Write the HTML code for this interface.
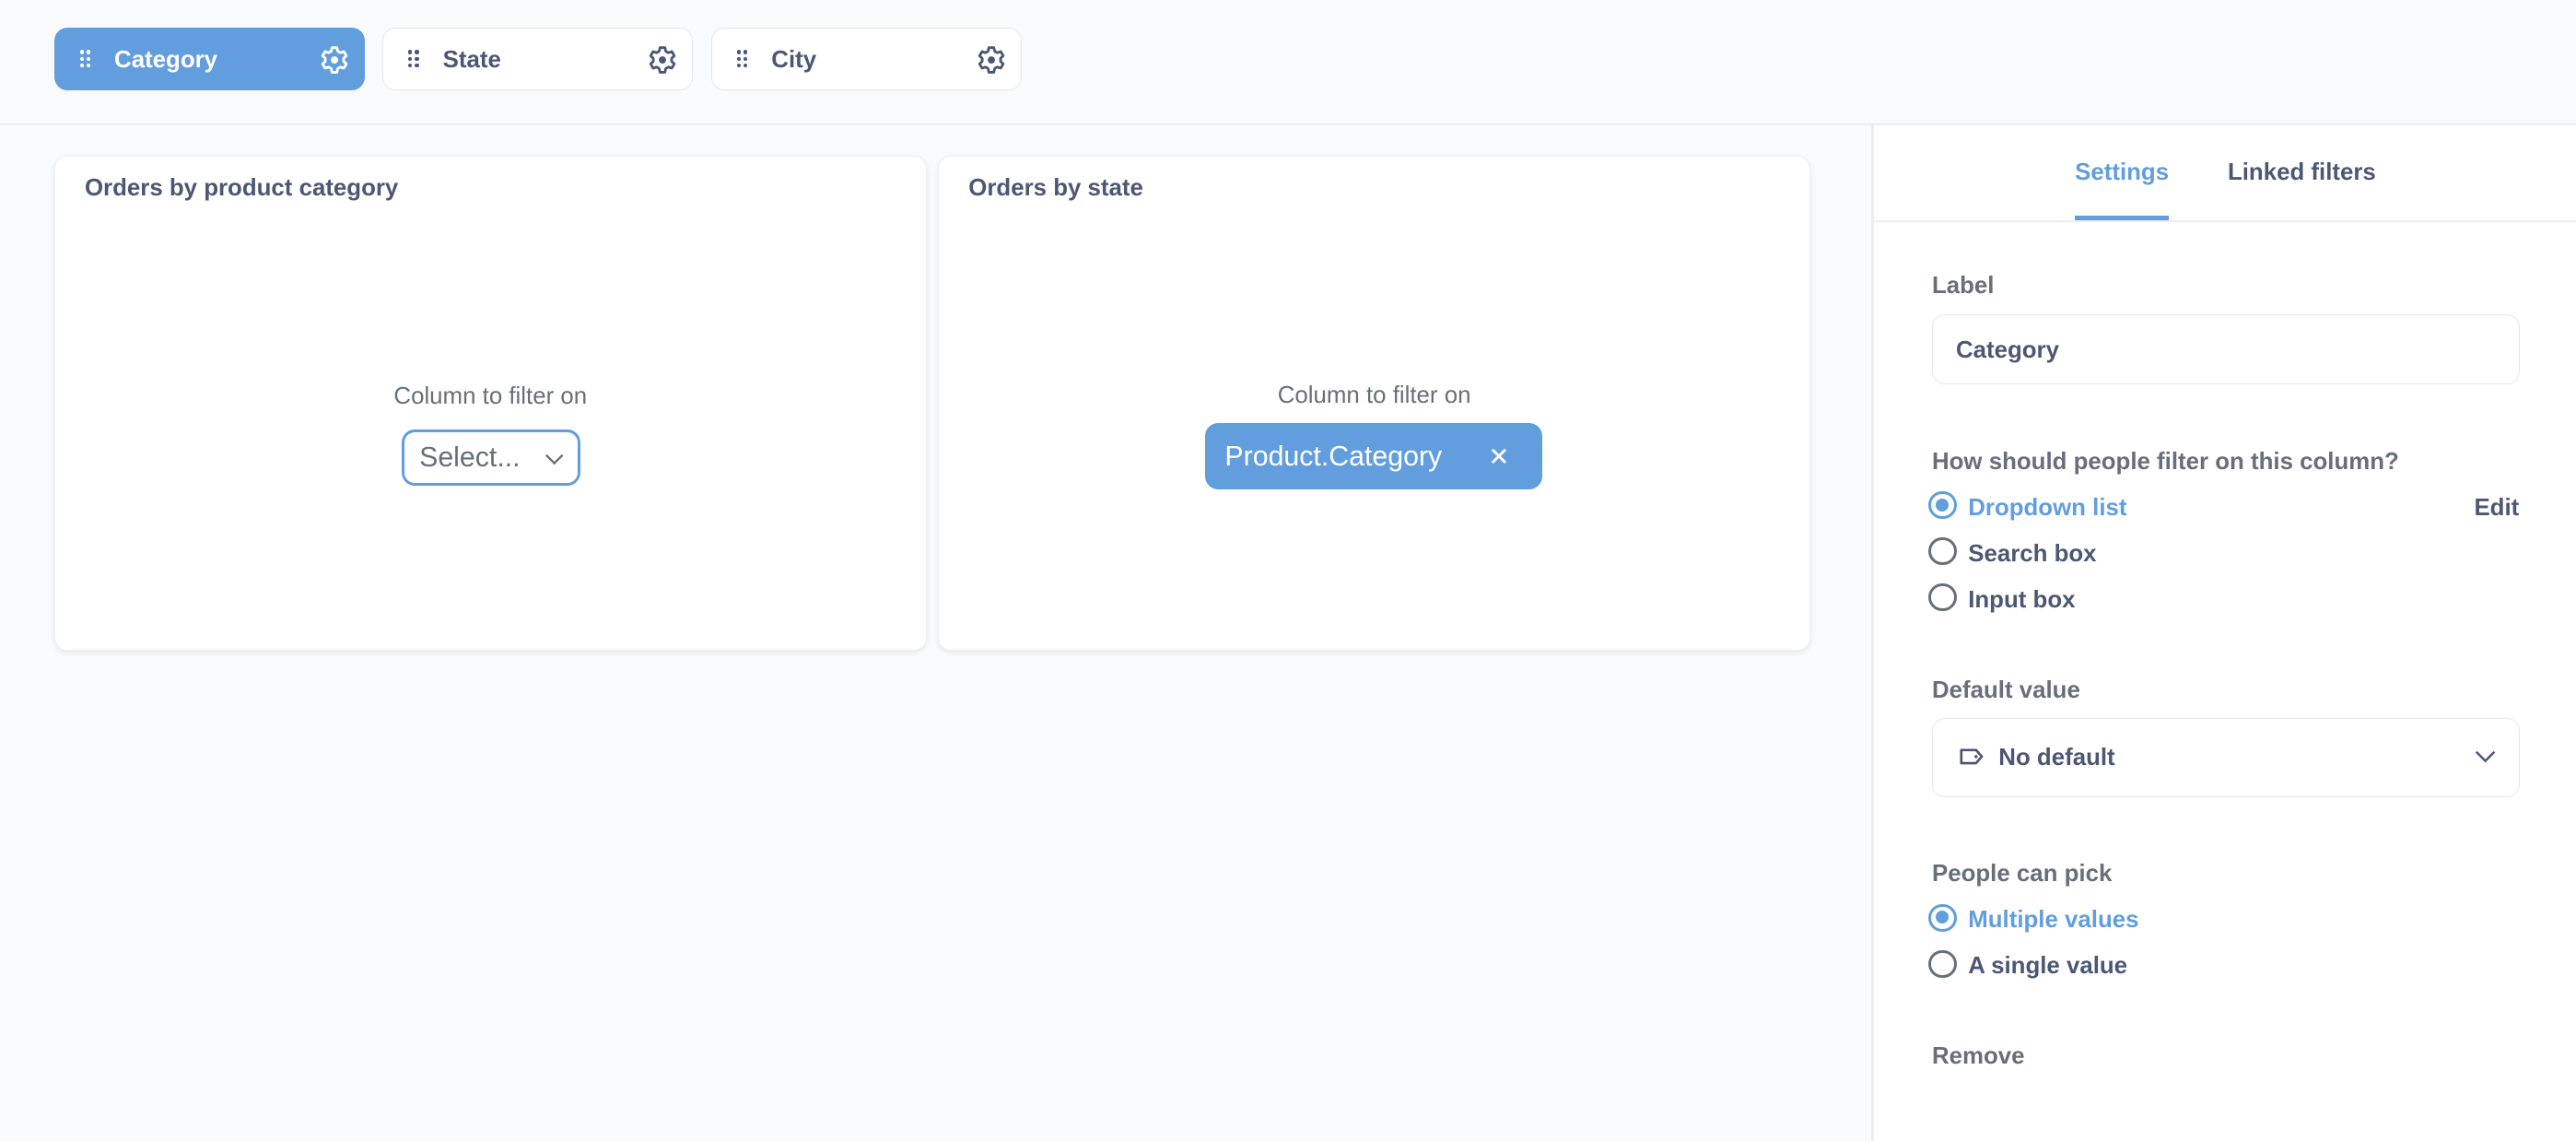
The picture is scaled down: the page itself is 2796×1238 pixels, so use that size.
<!DOCTYPE html>
<html><head><meta charset="utf-8"><style>
*{box-sizing:border-box;margin:0;padding:0}
html,body{width:2796px;height:1238px;overflow:hidden;background:#f9fafb}
#r{zoom:1.78316;width:1568px;height:694px;position:relative;font-family:"Liberation Sans",sans-serif;color:#4c5773;font-weight:700}
.a{position:absolute}
.btn{position:absolute;top:17px;height:38px;width:189px;border-radius:8px;background:#fff;border:1px solid #e6e7ea;font-size:14.5px;line-height:39px;padding-left:36px}
.btn.on{background:#629edd;border-color:#629edd;color:#fff}
.dots{position:absolute;left:15px;top:13px;width:6px;height:10px}
.dots i{position:absolute;width:2.4px;height:2.4px;border-radius:50%;background:currentColor}
.gear{position:absolute;right:9px;top:10px}
.card{position:absolute;top:95px;height:301px;background:#fff;border-radius:8px;box-shadow:0 1px 3px rgba(0,0,0,.08);border:1px solid #eef0f2}
.card h3{position:absolute;left:18px;top:11px;font-size:14.5px}
.cf{position:absolute;width:100%;text-align:center;font-size:14.5px;color:#696e7b;font-weight:400}
.t{position:absolute;font-size:14.5px;margin-top:2px}
.g{color:#696e7b}
.radio{position:absolute;left:1174px;width:17px;height:17px;border-radius:50%;border:2px solid #696e7b}
.radio.on{border-color:#629edd}
.radio.on:after{content:"";position:absolute;left:2.5px;top:2.5px;width:8px;height:8px;border-radius:50%;background:#629edd}
.box{position:absolute;left:1176px;width:358px;background:#fff;border:1px solid #e6e7ea;border-radius:8px}
</style></head><body><div id="r">
<div class="a" style="left:0;top:75px;width:1568px;height:1px;background:#ecedef"></div>

<div class="btn on" style="left:33px">Category
<span class="dots"><i style="left:0;top:0"></i><i style="left:4px;top:0"></i><i style="left:0;top:4px"></i><i style="left:4px;top:4px"></i><i style="left:0;top:8px"></i><i style="left:4px;top:8px"></i></span>
<svg class="gear" width="18" height="18" viewBox="0 0 18 18"><path d="M7.5 1.5h3l.5 2.2 1.6.9 2.1-.7 1.5 2.6-1.6 1.5v1.9l1.6 1.5-1.5 2.6-2.1-.7-1.6.9-.5 2.3h-3l-.5-2.3-1.6-.9-2.1.7-1.5-2.6 1.6-1.5V8l-1.6-1.5 1.5-2.6 2.1.7L7 3.7z" fill="none" stroke="#fff" stroke-width="1.6" stroke-linejoin="round"/><circle cx="9" cy="9" r="2.2" fill="#fff"/></svg></div>
<div class="btn" style="left:233px">State
<span class="dots"><i style="left:0;top:0"></i><i style="left:4px;top:0"></i><i style="left:0;top:4px"></i><i style="left:4px;top:4px"></i><i style="left:0;top:8px"></i><i style="left:4px;top:8px"></i></span>
<svg class="gear" width="18" height="18" viewBox="0 0 18 18"><path d="M7.5 1.5h3l.5 2.2 1.6.9 2.1-.7 1.5 2.6-1.6 1.5v1.9l1.6 1.5-1.5 2.6-2.1-.7-1.6.9-.5 2.3h-3l-.5-2.3-1.6-.9-2.1.7-1.5-2.6 1.6-1.5V8l-1.6-1.5 1.5-2.6 2.1.7L7 3.7z" fill="none" stroke="#4c5773" stroke-width="1.6" stroke-linejoin="round"/><circle cx="9" cy="9" r="2.2" fill="#4c5773"/></svg></div>
<div class="btn" style="left:433px">City
<span class="dots"><i style="left:0;top:0"></i><i style="left:4px;top:0"></i><i style="left:0;top:4px"></i><i style="left:4px;top:4px"></i><i style="left:0;top:8px"></i><i style="left:4px;top:8px"></i></span>
<svg class="gear" width="18" height="18" viewBox="0 0 18 18"><path d="M7.5 1.5h3l.5 2.2 1.6.9 2.1-.7 1.5 2.6-1.6 1.5v1.9l1.6 1.5-1.5 2.6-2.1-.7-1.6.9-.5 2.3h-3l-.5-2.3-1.6-.9-2.1.7-1.5-2.6 1.6-1.5V8l-1.6-1.5 1.5-2.6 2.1.7L7 3.7z" fill="none" stroke="#4c5773" stroke-width="1.6" stroke-linejoin="round"/><circle cx="9" cy="9" r="2.2" fill="#4c5773"/></svg></div>

<div class="card" style="left:33px;width:531px">
<h3>Orders by product category</h3>
<div class="cf" style="top:138px">Column to filter on</div>
<div class="a" style="left:211px;top:166px;width:109px;height:34px;border:2px solid #629edd;border-radius:8px;font-weight:400;font-size:17px;color:#696e7b;padding-left:9px;line-height:31px">Select...
<svg class="a" style="left:85px;top:12px" width="12" height="8" viewBox="0 0 12 8"><path d="M1 1.5l5 5 5-5" fill="none" stroke="#696e7b" stroke-width="1.3"/></svg></div>
</div>
<div class="card" style="left:571px;width:531px">
<h3>Orders by state</h3>
<div class="cf" style="top:137px">Column to filter on</div>
<div class="a" style="left:162px;top:162px;width:205px;height:40px;background:#629edd;border-radius:8px;color:#fff;font-weight:400;font-size:17px;line-height:42px;padding-left:12px">Product.Category
<svg class="a" style="left:174px;top:15px" width="10" height="10" viewBox="0 0 10 10"><path d="M1 1l8 8M9 1l-8 8" stroke="#fff" stroke-width="1.6"/></svg></div>
</div>

<div class="a" style="left:1139px;top:76px;width:429px;height:618px;background:#fff;border-left:2px solid #ecedef"></div>
<div class="a" style="left:1141px;top:134px;width:427px;height:1px;background:#ecedef"></div>
<div class="t" style="left:1263px;top:95px;color:#629edd">Settings</div>
<div class="a" style="left:1263px;top:131px;width:57px;height:3px;background:#629edd"></div>
<div class="t" style="left:1356px;top:95px">Linked filters</div>

<div class="t g" style="left:1176px;top:164px">Label</div>
<div class="box" style="top:191px;height:43px;padding-left:14px;line-height:43px;font-size:14.5px">Category</div>
<div class="t g" style="left:1176px;top:271px">How should people filter on this column?</div>
<div class="radio on" style="top:299px"></div><div class="t" style="left:1198px;top:299px;color:#629edd">Dropdown list</div>
<div class="t" style="left:1506px;top:299px">Edit</div>
<div class="radio" style="top:327px"></div><div class="t" style="left:1198px;top:327px">Search box</div>
<div class="radio" style="top:355px"></div><div class="t" style="left:1198px;top:355px">Input box</div>

<div class="t g" style="left:1176px;top:410px">Default value</div>
<div class="box" style="top:437px;height:48px;line-height:48px;font-size:14.5px;padding-left:40px">No default
<svg class="a" style="left:16px;top:18px" width="15" height="10" viewBox="0 0 15 10"><path d="M1 1h9l3.5 4-3.5 4H1z" fill="none" stroke="#4c5773" stroke-width="1.5" stroke-linejoin="round"/><circle cx="10" cy="5" r="1" fill="#4c5773"/></svg>
<svg class="a" style="left:330px;top:19px" width="13" height="8" viewBox="0 0 13 8"><path d="M1 1l5.5 5.5L12 1" fill="none" stroke="#4c5773" stroke-width="1.4"/></svg></div>

<div class="t g" style="left:1176px;top:522px">People can pick</div>
<div class="radio on" style="top:550px"></div><div class="t" style="left:1198px;top:550px;color:#629edd">Multiple values</div>
<div class="radio" style="top:578px"></div><div class="t" style="left:1198px;top:578px">A single value</div>
<div class="t g" style="left:1176px;top:633px">Remove</div>
</div></body></html>
